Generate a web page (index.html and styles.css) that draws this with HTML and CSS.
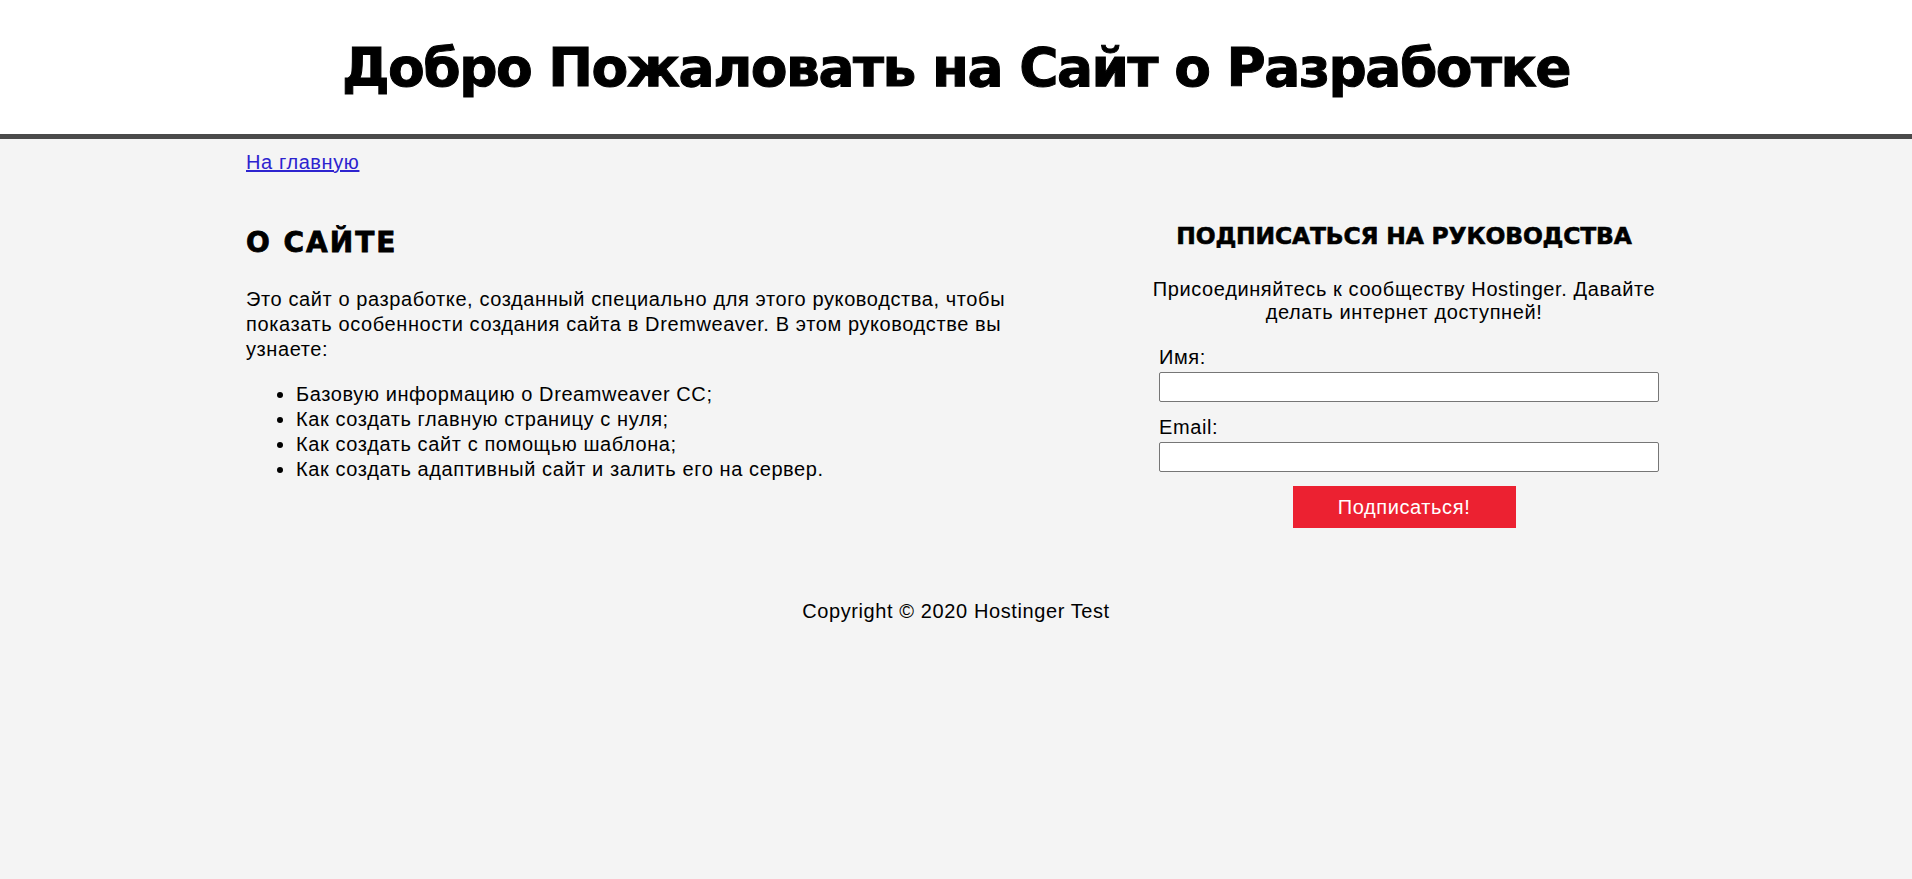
FILE: index.html
```html
<!DOCTYPE html>
<html lang="ru">
<head>
    <meta charset="UTF-8">
    <meta name="viewport" content="width=device-width, initial-scale=1.0">
    <title>Сайт о Разработке</title>
    <link rel="stylesheet" href="styles.css">
</head>
<body>
    <!-- Шапка -->
    <header class="site-header">
        <h1>Добро Пожаловать на Сайт о Разработке</h1>
    </header>

    <div class="wrapper">
        <nav class="nav">
            <a href="#">На главную</a>
        </nav>

        <div class="content">
            <!-- О сайте -->
            <section class="about">
                <h2>О САЙТЕ</h2>
                <p>Это сайт о разработке, созданный специально для этого руководства, чтобы показать особенности создания сайта в Dremweaver. В этом руководстве вы узнаете:</p>
                <ul>
                    <li>Базовую информацию о Dreamweaver CC;</li>
                    <li>Как создать главную страницу с нуля;</li>
                    <li>Как создать сайт с помощью шаблона;</li>
                    <li>Как создать адаптивный сайт и залить его на сервер.</li>
                </ul>
            </section>

            <!-- Подписка -->
            <aside class="subscribe">
                <h3>ПОДПИСАТЬСЯ НА РУКОВОДСТВА</h3>
                <p>Присоединяйтесь к сообществу Hostinger. Давайте делать интернет доступней!</p>
                <form class="subscribe-form">
                    <label for="name">Имя:</label>
                    <input type="text" id="name">
                    <label for="email">Email:</label>
                    <input type="email" id="email">
                    <button type="button">Подписаться!</button>
                </form>
            </aside>
        </div>

        <footer class="footer">Copyright &copy; 2020 Hostinger Test</footer>
    </div>
</body>
</html>
```

FILE: styles.css
```css
body {
    font-family: "Liberation Sans", Arial, sans-serif;
    font-size: 20px;
    line-height: 23px;
    letter-spacing: 0.6px;
    color: #000;
    background-color: #f4f4f4;
    margin: 0;
}
h1, h2, h3 {
    font-family: "DejaVu Sans", "Arial Black", sans-serif;
    font-weight: bold;
}
/* Шапка */
.site-header {
    background-color: #fff;
    border-bottom: 5px solid #4a4a4a;
    padding: 37px 0 35px;
    text-align: center;
}
.site-header h1 {
    margin: 0;
    font-size: 53.5px;
    line-height: 62px;
    letter-spacing: -1.5px;
    -webkit-text-stroke: 1px #000;
}
.wrapper {
    width: 1420px;
    margin: 0 auto;
}
.nav {
    padding-top: 12px;
}
.nav a {
    color: #2d23cf;
}
.content {
    display: grid;
    grid-template-columns: 820px 510px;
    column-gap: 83px;
    align-items: start;
}
/* О сайте */
.about {
    line-height: 25px;
}
.about h2 {
    font-size: 28px;
    line-height: 33px;
    letter-spacing: 2px;
    -webkit-text-stroke: 0.8px #000;
    margin: 52px 0 28px;
}
.about p {
    margin: 0;
}
.about ul {
    margin: 20px 0 0;
    padding-left: 50px;
}
/* Подписка */
.subscribe {
    text-align: center;
}
.subscribe h3 {
    font-size: 23.4px;
    line-height: 27px;
    letter-spacing: -0.15px;
    -webkit-text-stroke: 0.6px #000;
    margin: 49px 0 0;
}
.subscribe p {
    margin: 28px 0 0;
}
.subscribe-form {
    text-align: left;
}
.subscribe-form label {
    display: block;
    margin: 22px 0 0 10px;
}
.subscribe-form label[for="email"] {
    margin-top: 14px;
}
.subscribe-form input {
    display: block;
    box-sizing: border-box;
    width: 500px;
    height: 30px;
    margin: 3px 0 0 10px;
    border: 1px solid #767676;
    border-radius: 2px;
    background-color: #fff;
}
.subscribe-form button {
    display: block;
    width: 223px;
    height: 42px;
    margin: 14px auto 0;
    border: none;
    background-color: #ec2131;
    color: #fff;
    font-family: "Liberation Sans", Arial, sans-serif;
    font-size: 20px;
    letter-spacing: 0.6px;
    cursor: pointer;
}
.footer {
    padding-top: 72px;
    text-align: center;
}
```
